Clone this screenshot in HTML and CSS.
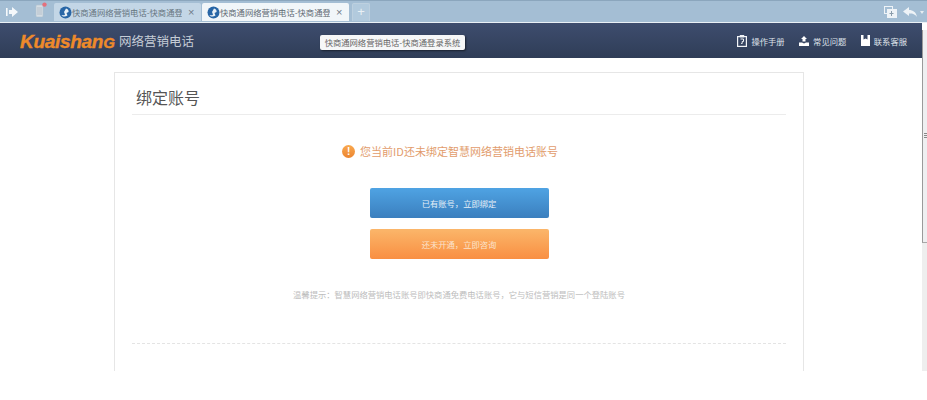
FILE: index.html
```html
<!DOCTYPE html>
<html lang="zh-CN">

<head>
    <meta charset="UTF-8">
    <meta name="viewport" content="width=device-width, initial-scale=1.0">
    <title>快商通网络营销电话-快商通登录系统</title>
    <link rel="stylesheet" href="styles.css">
</head>

<body>
    <div class="browser">
        <!-- Browser tab strip -->
        <div class="tabbar">
            <div class="tool-left">
                <svg class="tool-icon" width="12" height="10" viewBox="0 0 12 10">
                    <rect x="0" y="1" width="1.6" height="8" fill="#f4f8fb" />
                    <path d="M3 3h3V0l6 5-6 5V7H3z" fill="#f4f8fb" />
                </svg>
                <svg class="tool-phone" width="14" height="15" viewBox="0 0 14 15">
                    <rect x="1" y="3" width="7" height="12" rx="1" fill="#d5dde4" stroke="#b4c2ce" stroke-width="0.6" />
                    <rect x="2" y="5" width="5" height="8" fill="#c4ced7" />
                    <circle cx="9.5" cy="2.6" r="2.2" fill="#e4707c" />
                </svg>
            </div>
            <div class="tab">
                <svg class="globe" width="13" height="13" viewBox="0 0 13 13">
                    <circle cx="6.5" cy="6.5" r="6" fill="#2866a6" />
                    <path d="M7 2.500c2 .5 3 2 2.500 3.500L7.500 7l1 2.500C6.500 11 3.500 11 2.500 9c1.500.5 3 .5 3.500-.5L5 6z" fill="#e8f0f6" />
                </svg>
                <span class="tab-title">快商通网络营销电话-快商通登</span>
                <span class="tab-close">×</span>
            </div>
            <div class="tab tab-active">
                <svg class="globe" width="13" height="13" viewBox="0 0 13 13">
                    <circle cx="6.5" cy="6.5" r="6" fill="#2866a6" />
                    <path d="M7 2.500c2 .5 3 2 2.500 3.500L7.500 7l1 2.500C6.500 11 3.500 11 2.500 9c1.500.5 3 .5 3.500-.5L5 6z" fill="#e8f0f6" />
                </svg>
                <span class="tab-title">快商通网络营销电话-快商通登</span>
                <span class="tab-close">×</span>
            </div>
            <div class="tab-add">+</div>
            <div class="tool-right">
                <svg width="13" height="12" viewBox="0 0 13 12">
                    <rect x="0.5" y="0.5" width="8" height="7" fill="none" stroke="#eef3f7" />
                    <rect x="3" y="3" width="10" height="9" fill="#eef3f7" />
                    <path d="M7.5 5v5M5.5 7.5h4" stroke="#8a9cab" />
                </svg>
                <svg width="14" height="10" viewBox="0 0 14 10">
                    <path d="M0 4.500 6 0v3c4 0 7 2 8 7-2-3-4-3.600-8-3.600V9z" fill="#eef3f7" />
                </svg>
                <span class="tool-caret"></span>
            </div>
        </div>

        <div class="viewport">
            <div class="page">
                <div class="header-container">
                    <div class="logo">
                        <span class="logo-mark">Kuaishan<span class="logo-end">g</span></span>
                        <span class="logo-text">网络营销电话</span>
                    </div>
                    <div class="header-nav">
                        <a class="nav-item">
                            <svg width="10" height="12" viewBox="0 0 10 12">
                                <rect x="0.600" y="1.600" width="8.800" height="9.800" fill="none" stroke="#f2f4f7" stroke-width="1.200" />
                                <rect x="2.800" y="0" width="4.400" height="2.400" fill="#f2f4f7" />
                                <path d="M3.500 4h3v2.500H5.200V8.500H4.200" fill="none" stroke="#f2f4f7" />
                            </svg>
                            操作手册
                        </a>
                        <a class="nav-item">
                            <svg width="10" height="10" viewBox="0 0 10 10">
                                <path d="M5 0 8 3H6.500V5.500h-3V3H2z" fill="#fff" />
                                <path d="M0 6.500h3L5 7.500l2-1h3V10H0z" fill="#fff" />
                            </svg>
                            常见问题
                        </a>
                        <a class="nav-item">
                            <svg width="9" height="11" viewBox="0 0 9 11">
                                <path d="M0 0h2.500v4.500L4.500 3.500l2 1V0H9v11H0z" fill="#fff" />
                            </svg>
                            联系客服
                        </a>
                    </div>
                </div>

                <div class="card">
                    <div class="card-head">
                        <h1>绑定账号</h1>
                    </div>
                    <div class="notice">
                        <span class="notice-icon">!</span>
                        <span>您当前ID还未绑定智慧网络营销电话账号</span>
                    </div>
                    <div class="actions">
                        <button class="action-btn btn-blue">已有账号，立即绑定</button>
                        <button class="action-btn btn-orange">还未开通，立即咨询</button>
                    </div>
                    <p class="hint">温馨提示：智慧网络营销电话账号即快商通免费电话账号，它与短信营销是同一个登陆账号</p>
                    <div class="card-foot"></div>
                </div>
            </div>

            <div class="scrollbar">
                <div class="scroll-up"></div>
                <div class="scroll-thumb"><span class="scroll-grip"></span></div>
            </div>
        </div>

        <div class="tooltip">快商通网络营销电话-快商通登录系统</div>
    </div>
</body>

</html>
```

FILE: styles.css
```css
body {
    font-family: "Noto Sans CJK SC", "Liberation Sans", sans-serif;
    margin: 0;
    padding: 0;
    background-color: #fff;
    overflow: hidden;
}

.browser {
    position: relative;
    width: 927px;
    height: 371px;
    overflow: hidden;
}

.tabbar {
    display: flex;
    align-items: flex-end;
    height: 20px;
    padding-bottom: 1px;
    box-sizing: content-box;
    background-color: #a4bed4;
    border-top: 1px solid #8ba6bd;
    border-bottom: 1px solid #eaf1f6;
}

.tool-left {
    display: flex;
    align-items: center;
    width: 54px;
    height: 18px;
    padding-left: 6px;
    box-sizing: border-box;
}

.tool-phone {
    margin-left: 17px;
    margin-top: -5px;
}

.tab {
    display: flex;
    align-items: center;
    width: 147px;
    height: 18px;
    margin-right: 1px;
    padding-left: 5px;
    box-sizing: border-box;
    background-color: #c3d6e6;
    border-radius: 2px 2px 0 0;
    font-size: 8.300px;
    color: #66757f;
}

.tab-active {
    background-color: #f1f6f9;
    color: #5f6a73;
}

.tab-title {
    width: 110px;
    white-space: nowrap;
    overflow: hidden;
}

.tab-close {
    margin-left: 6px;
    font-size: 11px;
    color: #6f7c88;
    font-family: "Liberation Sans", sans-serif;
}

.tab-add {
    width: 18px;
    height: 18px;
    margin-left: 2px;
    background-color: #b2cadd;
    border: 1px solid #bdd0df;
    border-bottom: none;
    box-sizing: border-box;
    border-radius: 2px 2px 0 0;
    color: #e9f0f5;
    font-family: "Liberation Sans", sans-serif;
    font-size: 13px;
    line-height: 16px;
    text-align: center;
}

.tool-right {
    display: flex;
    align-items: center;
    gap: 6px;
    margin-left: auto;
    height: 18px;
    padding-right: 3px;
}

.tool-caret {
    width: 0;
    height: 0;
    border: 2px solid transparent;
    border-top: 3px solid #e6edf2;
    border-bottom: none;
    margin-left: -3px;
}

.viewport {
    display: flex;
    height: 348px;
}

.page {
    flex-grow: 1;
    min-width: 0;
}

.header-container {
    display: flex;
    align-items: center;
    justify-content: space-between;
    height: 35px;
    padding: 0 15px 0 20px;
    background: linear-gradient(#3e4d6e, #2f3d57);
}

.logo {
    display: flex;
    align-items: center;
}

.logo-mark {
    width: 95px;
    font-family: "Liberation Sans", sans-serif;
    font-size: 19px;
    font-weight: bold;
    font-style: italic;
    letter-spacing: -0.3px;
    color: #ee8a2a;
    -webkit-text-stroke: 0.4px #ee8a2a;
    white-space: nowrap;
}

.logo-end {
    font-size: 1.150em;
    font-variant: small-caps;
}

.logo-text {
    margin-left: 4px;
    font-size: 12.500px;
    color: #c5ccd6;
}

.header-nav {
    display: flex;
    align-items: center;
    gap: 14.500px;
}

.nav-item {
    display: flex;
    align-items: center;
    gap: 4px;
    font-size: 8.300px;
    color: #dfe3ea;
}

.card {
    width: 690px;
    height: 320px;
    margin: 14px 0 0 114px;
    padding: 0 17px;
    box-sizing: border-box;
    background-color: #fff;
    border: 1px solid #e6e6e6;
    border-bottom: none;
}

.card-head {
    height: 41px;
    border-bottom: 1px solid #ececec;
}

.card-head h1 {
    margin: 0;
    padding: 12px 0 0 4px;
    font-size: 16px;
    font-weight: normal;
    line-height: 24px;
    color: #555;
}

.notice {
    display: flex;
    align-items: center;
    justify-content: center;
    gap: 5px;
    margin-top: 27px;
    padding-right: 18px;
    height: 18px;
    font-size: 11px;
    color: #e29c6c;
}

.notice-icon {
    width: 13px;
    height: 13px;
    border-radius: 50%;
    background: linear-gradient(#f9a94f, #ec8530);
    color: #fff;
    font-family: "Liberation Sans", sans-serif;
    font-size: 10px;
    font-weight: bold;
    line-height: 13px;
    text-align: center;
}

.actions {
    display: flex;
    flex-direction: column;
    align-items: center;
    gap: 11px;
    margin-top: 28px;
}

.action-btn {
    display: block;
    width: 179px;
    height: 30px;
    padding: 0;
    border: none;
    border-radius: 2px;
    font-family: inherit;
    font-size: 8.300px;
    color: #e6eff7;
    cursor: pointer;
}

.btn-blue {
    background: linear-gradient(#4fa3e3, #3b7fbe);
}

.btn-orange {
    background: linear-gradient(#fbb66a, #f98f42);
    color: #fbe3cc;
}

.hint {
    margin: 29px 0 0;
    font-size: 8.300px;
    line-height: 12px;
    text-align: center;
    color: #bcbcbc;
}

.card-foot {
    margin-top: 43px;
    border-top: 1px dashed #e4e4e4;
}

.scrollbar {
    width: 5px;
    flex-shrink: 0;
    background-color: #eeeeee;
}

.scroll-up {
    height: 7px;
    background-color: #fff;
}

.scroll-thumb {
    display: flex;
    align-items: center;
    justify-content: flex-end;
    height: 213px;
    background-color: #efeff1;
    border-left: 1px solid #9a9a9a;
    border-bottom: 1px solid #a8a8a8;
    box-sizing: border-box;
}

.scroll-grip {
    width: 3px;
    height: 6px;
    background: repeating-linear-gradient(#888 0, #888 1px, #efeff1 1px, #efeff1 2px);
}

.tooltip {
    position: absolute;
    left: 320px;
    top: 35px;
    width: 145px;
    height: 15px;
    box-sizing: border-box;
    background-color: #f6f7f8;
    border-radius: 2px;
    box-shadow: 1px 1px 2px rgba(0, 0, 0, 0.5);
    font-size: 8.300px;
    line-height: 15px;
    text-align: center;
    white-space: nowrap;
    color: #666;
}
```
